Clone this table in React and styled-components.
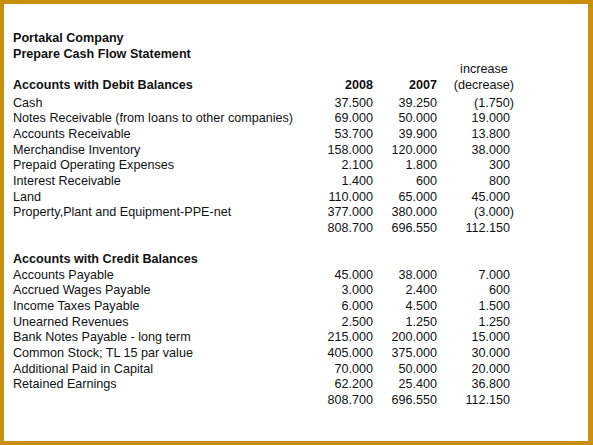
import React from 'react'
import styled, { createGlobalStyle } from 'styled-components'

const debit = [
  ['Cash', '37.500', '39.250', '(1.750)'],
  ['Notes Receivable (from loans to other companies)', '69.000', '50.000', '19.000'],
  ['Accounts Receivable', '53.700', '39.900', '13.800'],
  ['Merchandise Inventory', '158.000', '120.000', '38.000'],
  ['Prepaid Operating Expenses', '2.100', '1.800', '300'],
  ['Interest Receivable', '1.400', '600', '800'],
  ['Land', '110.000', '65.000', '45.000'],
  ['Property,Plant and Equipment-PPE-net', '377.000', '380.000', '(3.000)'],
  ['', '808.700', '696.550', '112.150'],
]

const credit = [
  ['Accounts Payable', '45.000', '38.000', '7.000'],
  ['Accrued Wages Payable', '3.000', '2.400', '600'],
  ['Income Taxes Payable', '6.000', '4.500', '1.500'],
  ['Unearned Revenues', '2.500', '1.250', '1.250'],
  ['Bank Notes Payable - long term', '215.000', '200.000', '15.000'],
  ['Common Stock; TL 15 par value', '405.000', '375.000', '30.000'],
  ['Additional Paid in Capital', '70.000', '50.000', '20.000'],
  ['Retained Earnings', '62.200', '25.400', '36.800'],
  ['', '808.700', '696.550', '112.150'],
]

function App() {
  return (
    <>
      <GlobalStyle />
      <Frame>
        <Title>Portakal Company</Title>
        <Title>Prepare Cash Flow Statement</Title>
        <Sheet>
          <HeadLabel>Accounts with Debit Balances</HeadLabel>
          <Year>2008</Year>
          <Year>2007</Year>
          <ChangeHead>increase<br />(decrease)</ChangeHead>
          {debit.map((r, i) => (
            <React.Fragment key={'d' + i}>
              <Label>{r[0]}</Label>
              <Num>{r[1]}</Num>
              <Num>{r[2]}</Num>
              <Change $neg={r[3].startsWith('(')}>{r[3]}</Change>
            </React.Fragment>
          ))}
          <Spacer />
          <SectionLabel>Accounts with Credit Balances</SectionLabel>
          {credit.map((r, i) => (
            <React.Fragment key={'c' + i}>
              <Label>{r[0]}</Label>
              <Num>{r[1]}</Num>
              <Num>{r[2]}</Num>
              <Change $neg={r[3].startsWith('(')}>{r[3]}</Change>
            </React.Fragment>
          ))}
        </Sheet>
      </Frame>
    </>
  )
}
export default App

const GlobalStyle = createGlobalStyle`
  body {
    margin: 0;
    background: #fff;
    font-family: "Liberation Sans", Arial, sans-serif;
    color: #111;
  }
`

const Frame = styled.div`
  width: 593px;
  height: 445px;
  box-sizing: border-box;
  border: 4px solid #c98f0f;
  border-right-width: 5px;
  background: #fff;
  padding: 27px 0 0 9px;
  font-size: 12.6px;
  line-height: 15.65px;
`

const Title = styled.div`
  font-weight: bold;
`

const Sheet = styled.div`
  display: grid;
  grid-template-columns: 300px 60px 64px 77px;
`

const HeadLabel = styled.div`
  font-weight: bold;
  align-self: end;
  padding-bottom: 2px;
`

const Year = styled.div`
  font-weight: bold;
  text-align: right;
  align-self: end;
  padding-bottom: 2px;
`

const ChangeHead = styled.div`
  justify-self: end;
  text-align: center;
  align-self: end;
  padding-bottom: 2px;
`

const Label = styled.div`
  white-space: nowrap;
`

const SectionLabel = styled.div`
  grid-column: 1 / -1;
  font-weight: bold;
`

const Spacer = styled.div`
  grid-column: 1 / -1;
  height: 15.65px;
`

const Num = styled.div`
  text-align: right;
`

const Change = styled.div`
  text-align: right;
  padding-right: ${p => (p.$neg ? '0' : '4px')};
`
